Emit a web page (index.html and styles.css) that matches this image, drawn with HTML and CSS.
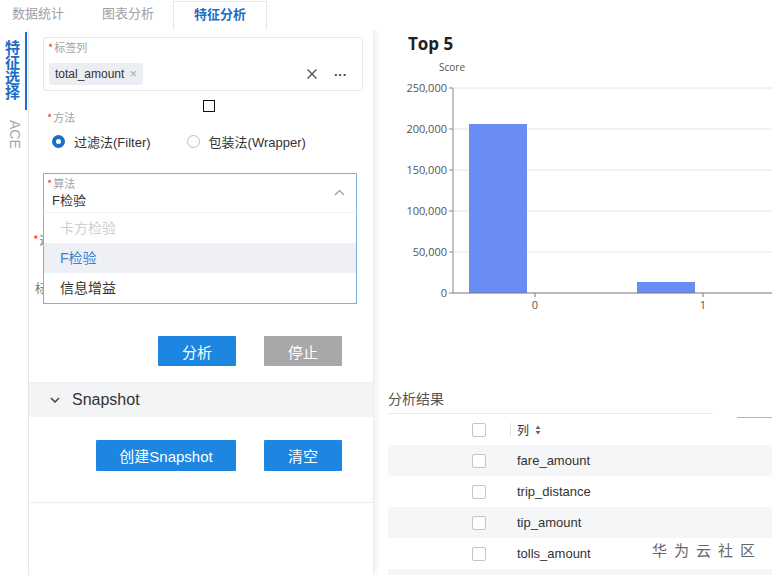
FILE: index.html
```html
<!DOCTYPE html>
<html lang="zh">
  <head>
    <meta charset="UTF-8" />
    <meta name="viewport" content="width=device-width, initial-scale=1.0" />
    <title>特征分析</title>
    <link rel="stylesheet" href="styles.css">
  </head>
  <body>
    <div class="tabs">
      <div class="tab first">数据统计</div>
      <div class="tab">图表分析</div>
      <div class="tab active">特征分析</div>
    </div>

    <div class="main">
      <div class="side">
        <div class="side-item active">特征选择</div>
        <div class="side-item ace">ACE</div>
      </div>

      <div class="panel">
        <div class="form">
          <div class="field-box">
            <div class="label"><span class="req">*</span>标签列</div>
            <div class="tag-row">
              <span class="tag">total_amount<span class="tag-x">×</span></span>
              <span class="tag-tools">
                <svg class="clear" width="12" height="12" viewBox="0 0 12 12">
                  <path d="M1.5 1.5 L10.5 10.5 M10.5 1.5 L1.5 10.5" stroke="#555" stroke-width="1.4" fill="none" />
                </svg>
                <span class="more">···</span>
              </span>
            </div>
          </div>

          <div class="label method-label"><span class="req">*</span>方法</div>
          <div class="radios">
            <label class="radio"><span class="dot checked"></span>过滤法(Filter)</label>
            <label class="radio"><span class="dot"></span>包装法(Wrapper)</label>
          </div>

          <div class="select">
            <div class="label"><span class="req">*</span>算法</div>
            <div class="select-value">F检验</div>
            <svg class="arrow" width="11" height="7" viewBox="0 0 11 7">
              <path d="M1 6 L5.5 1.5 L10 6" stroke="#999" stroke-width="1.2" fill="none" />
            </svg>
            <div class="menu">
              <div class="option disabled">卡方检验</div>
              <div class="option selected">F检验</div>
              <div class="option">信息增益</div>
            </div>
          </div>

          <div class="under-row"><span class="req">*</span>选择</div>
          <div class="under-row second">标准</div>

          <div class="btns">
            <button class="btn">分析</button>
            <button class="btn gray">停止</button>
          </div>
        </div>

        <div class="collapse-head">
          <svg width="10" height="6" viewBox="0 0 10 6">
            <path d="M1 1 L5 5 L9 1" stroke="#444" stroke-width="1.5" fill="none" />
          </svg>
          <span>Snapshot</span>
        </div>
        <div class="snap-body">
          <div class="btns">
            <button class="btn wide">创建Snapshot</button>
            <button class="btn">清空</button>
          </div>
        </div>
      </div>

      <div class="result">
        <div class="chart-title">Top 5</div>
        <svg class="chart" width="384" height="260" viewBox="0 0 384 260">
          <text x="64" y="16" class="axis-name">Score</text>
          <g stroke="#e6e6e6">
            <line x1="66" y1="33" x2="384" y2="33" />
            <line x1="66" y1="74" x2="384" y2="74" />
            <line x1="66" y1="115" x2="384" y2="115" />
            <line x1="66" y1="156" x2="384" y2="156" />
            <line x1="66" y1="197" x2="384" y2="197" />
          </g>
          <g stroke="#888">
            <line x1="61" y1="33" x2="65" y2="33" />
            <line x1="61" y1="74" x2="65" y2="74" />
            <line x1="61" y1="115" x2="65" y2="115" />
            <line x1="61" y1="156" x2="65" y2="156" />
            <line x1="61" y1="197" x2="65" y2="197" />
            <line x1="61" y1="238" x2="65" y2="238" />
          </g>
          <g class="y-labels">
            <text x="59" y="37">250,000</text>
            <text x="59" y="78">200,000</text>
            <text x="59" y="119">150,000</text>
            <text x="59" y="160">100,000</text>
            <text x="59" y="201">50,000</text>
            <text x="59" y="242">0</text>
          </g>
          <rect x="81" y="69" width="58" height="169" fill="#6a8cf5" />
          <rect x="249" y="227" width="58" height="11" fill="#6a8cf5" />
          <line x1="65" y1="33" x2="65" y2="238" stroke="#888" />
          <line x1="65" y1="238" x2="384" y2="238" stroke="#777" stroke-width="1.2" />
          <g stroke="#777">
            <line x1="147" y1="238" x2="147" y2="242" />
            <line x1="315" y1="238" x2="315" y2="242" />
          </g>
          <g class="x-labels">
            <text x="147" y="254">0</text>
            <text x="315" y="254">1</text>
          </g>
        </svg>

        <div class="result-head">
          <div class="result-title">分析结果</div>
          <div class="result-line"></div>
        </div>
        <div class="table">
          <div class="t-row head">
            <span class="check"></span>
            <span class="col-sep"></span>
            <span class="cell">列</span>
            <svg class="sort" width="6" height="10" viewBox="0 0 6 10">
              <path d="M3 0.5 L5.5 4 L0.5 4 Z M3 9.5 L5.5 6 L0.5 6 Z" fill="#666" />
            </svg>
          </div>
          <div class="t-row odd"><span class="check"></span><span class="cell">fare_amount</span></div>
          <div class="t-row"><span class="check"></span><span class="cell">trip_distance</span></div>
          <div class="t-row odd"><span class="check"></span><span class="cell">tip_amount</span></div>
          <div class="t-row"><span class="check"></span><span class="cell">tolls_amount</span></div>
          <div class="t-row odd"></div>
        </div>
      </div>
    </div>

    <div class="cursor-box"></div>
    <div class="watermark">华为云社区</div>
  </body>
</html>
```

FILE: styles.css
```css
body {
  margin: 0;
  width: 772px;
  height: 575px;
  overflow: hidden;
  position: relative;
  background-color: #fff;
  font-family: "Liberation Sans", "Noto Sans CJK SC", sans-serif;
  color: #333;
}
.tabs {
  display: flex;
  height: 30px;
  align-items: flex-end;
}
.tab {
  height: 29px;
  line-height: 24px;
  padding: 0 19px;
  font-size: 13px;
  color: #a0a0a0;
  font-family: "Noto Sans CJK SC", sans-serif;
  box-sizing: border-box;
}
.tab.first {
  padding-left: 12px;
}
.tab.active {
  padding: 0 20px;
  border: 1px solid #e6e6e6;
  border-bottom: none;
  color: #1a6fc4;
  font-weight: bold;
  background-color: #fff;
}
.main {
  display: flex;
  height: 545px;
  overflow: hidden;
}
.side {
  width: 28px;
  border-right: 1px solid #e8e8e8;
  flex-shrink: 0;
}
.side-item {
  width: 27px;
  box-sizing: border-box;
  writing-mode: vertical-rl;
  line-height: 25px;
  font-family: "Noto Sans CJK SC", sans-serif;
}
.side-item.active {
  margin-top: 2px;
  height: 78px;
  padding-top: 8px;
  border-right: 2px solid #1a6fc4;
  color: #1a6fc4;
  font-size: 15px;
  font-weight: bold;
}
.side-item.ace {
  margin-top: 10px;
  font-size: 14px;
  color: #a5a5a5;
  font-family: "Liberation Sans", sans-serif;
}
.panel {
  width: 344px;
  flex-shrink: 0;
  border-right: 1px solid #ececec;
  box-shadow: 3px 0 5px rgba(0, 0, 0, 0.05);
  position: relative;
  z-index: 1;
  background-color: #fff;
}
.form {
  padding: 7px 10px 16px 14px;
}
.label {
  font-size: 11px;
  line-height: 12px;
  color: #a3a3a3;
  font-family: "Noto Sans CJK SC", sans-serif;
}
.req {
  color: #e53935;
  margin-right: 1px;
}
.field-box {
  height: 54px;
  box-sizing: border-box;
  border: 1px solid #e6e6e6;
  border-radius: 3px;
  padding: 3px 5px 0 3px;
}
.field-box .label {
  padding-left: 1px;
}
.tag-row {
  display: flex;
  align-items: center;
  margin-top: 10px;
  padding-left: 2px;
}
.tag {
  height: 22px;
  line-height: 22px;
  padding: 0 6px;
  background-color: #eceef4;
  border-radius: 2px;
  font-size: 12px;
  color: #333;
}
.tag-x {
  color: #aaa;
  margin-left: 5px;
  font-size: 13px;
}
.tag-tools {
  margin-left: auto;
  display: flex;
  align-items: center;
  margin-right: 10px;
}
.clear {
  margin-right: 16px;
}
.more {
  font-size: 13px;
  letter-spacing: 0;
  color: #444;
  font-weight: bold;
}
.method-label {
  margin-top: 20px;
  padding-left: 4px;
}
.radios {
  display: flex;
  height: 20px;
  align-items: center;
  margin-top: 8px;
  padding-left: 9px;
  font-size: 13px;
}
.radio {
  display: flex;
  align-items: center;
  margin-right: 36px;
}
.dot {
  width: 13px;
  height: 13px;
  box-sizing: border-box;
  border: 1px solid #bdbdbd;
  border-radius: 50%;
  margin-right: 9px;
}
.dot.checked {
  border: 4px solid #1a6fc4;
}
.select {
  position: relative;
  height: 39px;
  box-sizing: border-box;
  margin-top: 22px;
  margin-right: 6px;
  border: 1px solid #7eb1e2;
  border-bottom: none;
  padding: 3px 4px 0 3px;
}
.select-value {
  margin-top: 4px;
  padding-left: 5px;
  font-size: 13px;
  line-height: 16px;
  color: #333;
}
.select .arrow {
  position: absolute;
  right: 11px;
  top: 15px;
}
.menu {
  position: absolute;
  top: 100%;
  left: -1px;
  right: -1px;
  z-index: 2;
  background-color: #fff;
  border: 1px solid #7eb1e2;
  border-top: 1px solid #eef0f3;
}
.option {
  height: 30px;
  line-height: 30px;
  padding-left: 16px;
  font-size: 14px;
  color: #333;
}
.option.disabled {
  color: #cfcfcf;
}
.option.selected {
  color: #3a7fd0;
  background-color: #eef0f5;
}
.under-row {
  width: 10px;
  height: 24px;
  line-height: 24px;
  margin-top: 16px;
  margin-left: -10px;
  overflow: hidden;
  white-space: nowrap;
  font-size: 12px;
  color: #777;
  font-family: "Noto Sans CJK SC", sans-serif;
}
.under-row.second {
  margin-top: 24px;
  padding-left: 2px;
  box-sizing: border-box;
}
.btns {
  display: flex;
  justify-content: flex-end;
  gap: 28px;
  padding-right: 21px;
}
.form .btns {
  margin-top: 36px;
}
.btn {
  width: 78px;
  height: 30px;
  border: none;
  border-radius: 1px;
  background-color: #1d86e0;
  color: #fff;
  font-size: 15px;
  font-family: "Liberation Sans", "Noto Sans CJK SC", sans-serif;
  padding: 0;
}
.btn.gray {
  background-color: #a8a8a8;
}
.btn.wide {
  width: 140px;
}
.snap-body .btns {
  padding-right: 31px;
}
.snap-body .btn {
  height: 31px;
}
.collapse-head {
  height: 34px;
  border-top: 1px solid #eeeeee;
  background-color: #f3f4f6;
  display: flex;
  align-items: center;
  padding-left: 21px;
  font-size: 16px;
  color: #333;
}
.collapse-head span {
  margin-left: 12px;
}
.snap-body {
  padding: 23px 0 31px;
  border-bottom: 1px solid #eeeeee;
}
.result {
  flex: 1;
  padding: 3px 0 0 14px;
  position: relative;
}
.chart-title {
  margin-left: 20px;
  font-family: "Open Sans", sans-serif;
  font-weight: bold;
  font-size: 17px;
  line-height: 22px;
  color: #222;
}
.chart {
  display: block;
}
.chart text {
  font-family: "Open Sans", sans-serif;
  font-size: 11px;
  fill: #555;
}
.chart .axis-name {
  font-size: 10px;
  text-anchor: middle;
}
.y-labels text {
  text-anchor: end;
}
.x-labels text {
  text-anchor: middle;
}
.result-head {
  display: flex;
  height: 25px;
  margin-top: 74px;
}
.result-title {
  width: 325px;
  height: 24px;
  line-height: 18px;
  border-bottom: 1px solid #ececec;
  font-size: 14px;
  color: #555;
  font-family: "Noto Sans CJK SC", sans-serif;
}
.result-line {
  flex: 1;
  height: 1px;
  margin: 28px 0 0 24px;
  background-color: #b5b5b5;
}
.t-row {
  height: 31px;
  display: flex;
  align-items: center;
  font-size: 13px;
  color: #333;
}
.t-row.odd {
  background-color: #f5f6f8;
}
.check {
  width: 14px;
  height: 14px;
  box-sizing: border-box;
  border: 1px solid #c4c4c4;
  border-radius: 2px;
  background-color: #fff;
  margin-left: 84px;
  margin-right: 31px;
}
.col-sep {
  width: 1px;
  height: 13px;
  background-color: #e0e0e0;
  margin-left: -7px;
  margin-right: 6px;
}
.head .cell {
  font-family: "Noto Sans CJK SC", sans-serif;
  font-size: 12px;
}
.sort {
  margin-left: 6px;
}
.cursor-box {
  position: absolute;
  left: 203px;
  top: 100px;
  width: 12px;
  height: 12px;
  box-sizing: border-box;
  border: 1.5px solid #111;
  z-index: 5;
}
.watermark {
  position: absolute;
  left: 652px;
  top: 540px;
  font-size: 15px;
  letter-spacing: 7px;
  color: #666;
  font-family: "Noto Sans CJK SC", sans-serif;
  line-height: 20px;
}
```
